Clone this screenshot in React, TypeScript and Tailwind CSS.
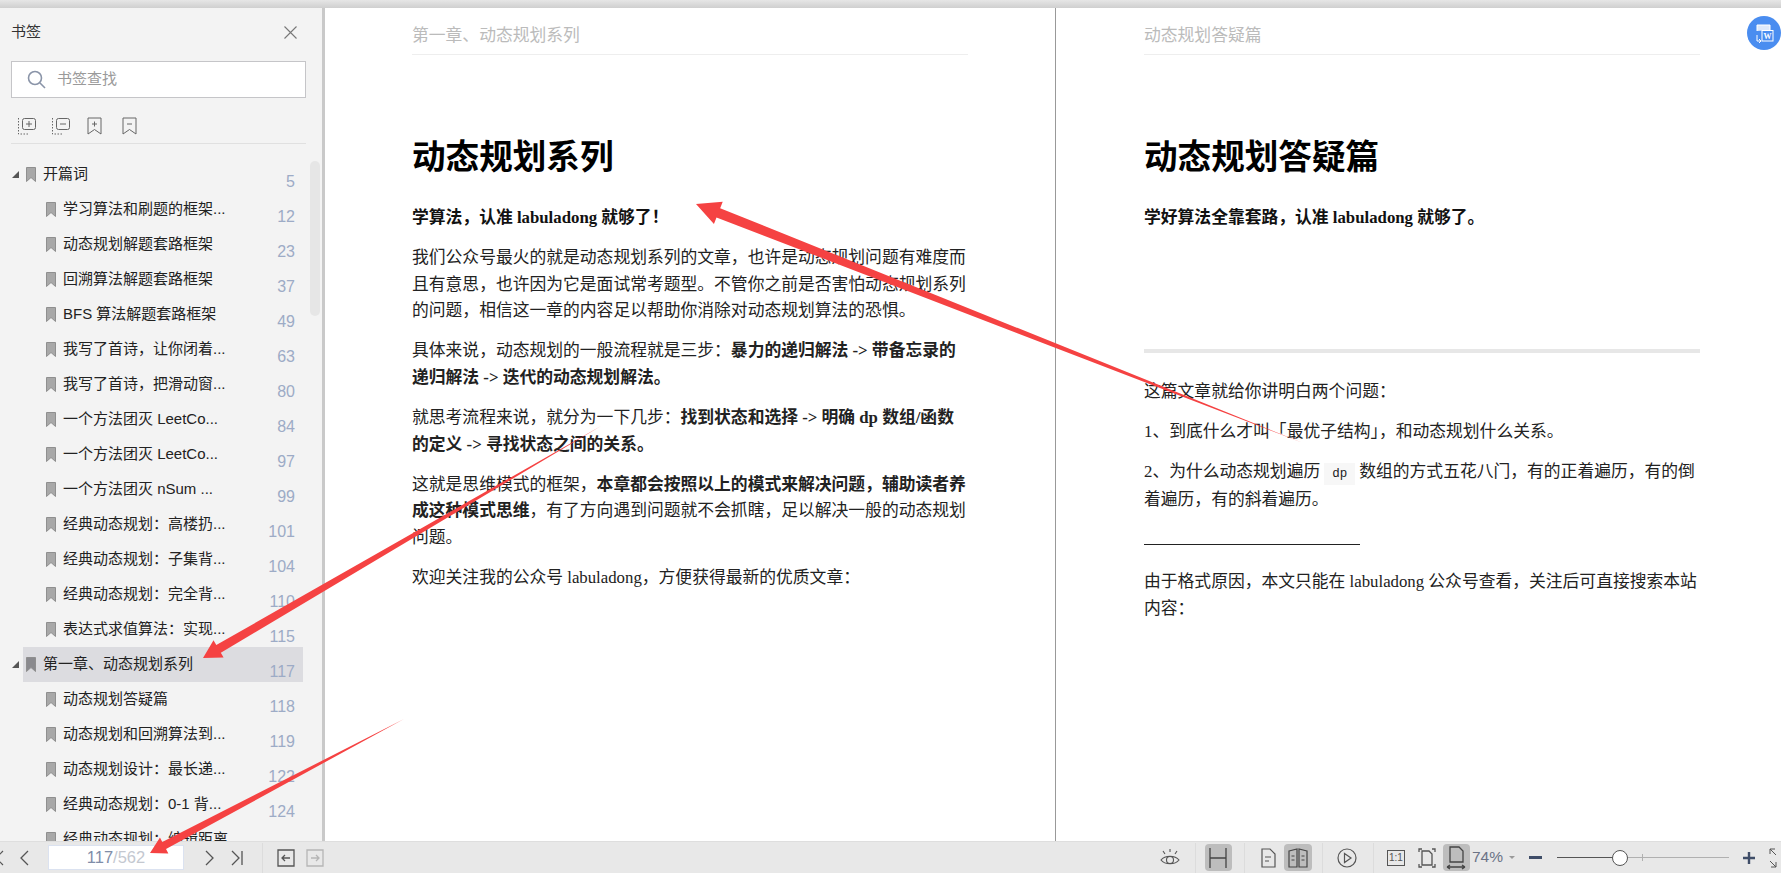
const sans = 'font-["Liberation_Sans","Noto_Sans_CJK_SC",sans-serif]';

const bookmarks: { title: string; page?: number; top?: boolean; active?: boolean }[] = [
  { title: '开篇词', page: 5, top: true },
  { title: '学习算法和刷题的框架...', page: 12 },
  { title: '动态规划解题套路框架', page: 23 },
  { title: '回溯算法解题套路框架', page: 37 },
  { title: 'BFS 算法解题套路框架', page: 49 },
  { title: '我写了首诗，让你闭着...', page: 63 },
  { title: '我写了首诗，把滑动窗...', page: 80 },
  { title: '一个方法团灭 LeetCo...', page: 84 },
  { title: '一个方法团灭 LeetCo...', page: 97 },
  { title: '一个方法团灭 nSum ...', page: 99 },
  { title: '经典动态规划：高楼扔...', page: 101 },
  { title: '经典动态规划：子集背...', page: 104 },
  { title: '经典动态规划：完全背...', page: 110 },
  { title: '表达式求值算法：实现...', page: 115 },
  { title: '第一章、动态规划系列', page: 117, top: true, active: true },
  { title: '动态规划答疑篇', page: 118 },
  { title: '动态规划和回溯算法到...', page: 119 },
  { title: '动态规划设计：最长递...', page: 122 },
  { title: '经典动态规划：0-1 背...', page: 124 },
  { title: '经典动态规划：编辑距离' },
];

function BookmarkRow({ item }: { item: (typeof bookmarks)[number] }) {
  return (
    <div className="flex h-[35px] shrink-0 items-center pr-[19px] pl-[12px]">
      <span className="w-[11px] shrink-0">
        {item.top && <span className="block h-0 w-0 border-b-[7px] border-l-[7px] border-b-[#555] border-l-transparent" />}
      </span>
      <div className={`flex h-full flex-1 items-center ${item.top ? 'pl-[3px]' : 'pl-[23px]'} ${item.active ? 'bg-[#dcdce0]' : ''}`}>
        <svg width="10" height="15" viewBox="0 0 10 15" className="shrink-0">
          <path d="M0.5 0.5H9.5V14.5L5 10.5L0.5 14.5Z" fill={item.active ? '#8a8a8e' : '#a8a8a8'} stroke="#8f8f8f" />
        </svg>
        <span className="ml-[7px] text-[15px] whitespace-nowrap text-[#222]">{item.title}</span>
        {item.page !== undefined && (
          <span className="mr-[8px] ml-auto translate-y-[8px] text-[16px] text-[#9dabc6]">{item.page}</span>
        )}
      </div>
    </div>
  );
}

function TreeTool({ minus }: { minus?: boolean }) {
  return (
    <svg width="18" height="18" viewBox="0 0 18 18" fill="none" stroke="#666">
      <path d="M0.5 1V17H11" strokeDasharray="1.5 1.5" />
      <rect x="4.5" y="1.5" width="13" height="11" rx="2" />
      <path d={minus ? 'M8 7H14' : 'M8 7H14M11 4V10'} />
    </svg>
  );
}

function MarkTool({ minus }: { minus?: boolean }) {
  return (
    <svg width="15" height="18" viewBox="0 0 15 18" fill="none" stroke="#666">
      <path d="M1 1H14V17L7.5 12.5L1 17Z" />
      <path d={minus ? 'M5 7H10' : 'M5 7H10M7.5 4.5V9.5'} />
    </svg>
  );
}

function Sidebar() {
  return (
    <aside className={`flex h-full w-[322px] shrink-0 flex-col overflow-hidden bg-[#f3f3f3] ${sans}`}>
      <div className="flex h-[48px] shrink-0 items-center justify-between pr-[25px] pl-[11px]">
        <span className="text-[15px] text-[#333]">书签</span>
        <svg width="13" height="13" viewBox="0 0 13 13" stroke="#777" strokeWidth="1.1">
          <path d="M0.5 0.5L12.5 12.5M12.5 0.5L0.5 12.5" />
        </svg>
      </div>
      <div className="mt-[5px] mr-[16px] ml-[11px] flex h-[37px] shrink-0 items-center border border-[#c5c5c8] bg-white pl-[15px]">
        <svg width="19" height="19" viewBox="0 0 19 19" fill="none" stroke="#8a94a8" strokeWidth="1.6">
          <circle cx="8" cy="8" r="6.5" />
          <path d="M13 13L18 18" />
        </svg>
        <span className="ml-[11px] text-[15px] text-[#9a9a9a]">书签查找</span>
      </div>
      <div className="mr-[16px] ml-[11px] flex h-[46px] shrink-0 items-center border-b border-[#e0e0e0] pt-[11px] pl-[7px]">
        <TreeTool />
        <span className="ml-[16px]"><TreeTool minus /></span>
        <span className="ml-[17px]"><MarkTool /></span>
        <span className="ml-[20px]"><MarkTool minus /></span>
      </div>
      <div className="relative min-h-0 flex-1 overflow-hidden pt-[13px]">
        {bookmarks.map((item, i) => (
          <BookmarkRow key={i} item={item} />
        ))}
        <div className="absolute top-[17px] right-[2px] h-[155px] w-[10px] rounded-full bg-[#e6e6e6]" />
      </div>
    </aside>
  );
}

function LeftPage() {
  return (
    <section className="h-full w-[730px] shrink-0 overflow-hidden bg-white px-[87px]">
      <div className="flex h-[47px] items-end border-b border-[#eee] pb-[4px] text-[#bbb]">第一章、动态规划系列</div>
      <h1 className="mt-[81px] text-[33.6px] leading-[44px] font-bold text-black">动态规划系列</h1>
      <p className="mt-[25px] mb-[13.5px] font-bold text-[#111]">学算法，认准 labuladong 就够了！</p>
      <p className="mb-[13.5px]">我们公众号最火的就是动态规划系列的文章，也许是动态规划问题有难度而且有意思，也许因为它是面试常考题型。不管你之前是否害怕动态规划系列的问题，相信这一章的内容足以帮助你消除对动态规划算法的恐惧。</p>
      <p className="mb-[13.5px]">具体来说，动态规划的一般流程就是三步：<b>暴力的递归解法 -&gt; 带备忘录的递归解法 -&gt; 迭代的动态规划解法。</b></p>
      <p className="mb-[13.5px]">就思考流程来说，就分为一下几步：<b>找到状态和选择 -&gt; 明确 dp 数组/函数的定义 -&gt; 寻找状态之间的关系。</b></p>
      <p className="mb-[13.5px]">这就是思维模式的框架，<b>本章都会按照以上的模式来解决问题，辅助读者养成这种模式思维</b>，有了方向遇到问题就不会抓瞎，足以解决一般的动态规划问题。</p>
      <p>欢迎关注我的公众号 labuladong，方便获得最新的优质文章：</p>
    </section>
  );
}

function RightPage() {
  return (
    <section className="h-full flex-1 overflow-hidden bg-white pr-[81px] pl-[88px]">
      <div className="flex h-[47px] items-end border-b border-[#eee] pb-[4px] text-[#bbb]">动态规划答疑篇</div>
      <h1 className="mt-[81px] text-[33.6px] leading-[44px] font-bold text-black">动态规划答疑篇</h1>
      <p className="mt-[25px] font-bold text-[#111]">学好算法全靠套路，认准 labuladong 就够了。</p>
      <div className="mt-[117px] mb-[26px] h-[4px] bg-[#e7e7e7]" />
      <p className="mb-[13.5px]">这篇文章就给你讲明白两个问题：</p>
      <p className="mb-[13.5px]">1、到底什么才叫「最优子结构」，和动态规划什么关系。</p>
      <p className="mb-[13.5px]">
        2、为什么动态规划遍历
        <code className="mx-[4px] bg-[#f7f7f7] px-[8px] py-[4px] font-['Liberation_Mono',monospace] text-[12.5px]">dp</code>
        数组的方式五花八门，有的正着遍历，有的倒着遍历，有的斜着遍历。
      </p>
      <div className="mt-[30px] mb-[24px] h-[1px] w-[216px] bg-[#222]" />
      <p>由于格式原因，本文只能在 labuladong 公众号查看，关注后可直接搜索本站内容：</p>
    </section>
  );
}

function StatusIcon({ d, w = 20, h = 20, sw = 1.2, color = '#555' }: { d: string; w?: number; h?: number; sw?: number; color?: string }) {
  return (
    <svg width={w} height={h} viewBox={`0 0 ${w} ${h}`} fill="none" stroke={color} strokeWidth={sw} className="shrink-0">
      <path d={d} />
    </svg>
  );
}

function Sep({ className }: { className: string }) {
  return <span className={`h-[30px] w-px shrink-0 bg-[#dcdcdc] ${className}`} />;
}

function StatusBar() {
  return (
    <footer className={`flex h-[32px] shrink-0 items-center overflow-hidden border-t border-[#dedede] bg-[#e8e8e8] ${sans}`}>
      <span className="ml-[-8px]"><StatusIcon w={12} h={18} d="M2 2V16M11 2L4 9L11 16" /></span>
      <span className="ml-[16px]"><StatusIcon w={9} h={18} d="M8 2L1 9L8 16" sw={1.3} /></span>
      <div className="ml-[19px] flex h-[25px] w-[136px] shrink-0 items-center justify-center border border-[#dbe2f0] bg-white text-[16.5px]">
        <span className="text-[#7f8da8]">117</span>
        <span className="text-[#c4c8d0]">/562</span>
      </div>
      <span className="ml-[21px]"><StatusIcon w={9} h={18} d="M1 2L8 9L1 16" sw={1.3} /></span>
      <span className="ml-[17px]"><StatusIcon w={12} h={18} d="M1 2L8 9L1 16M11 2V16" sw={1.3} /></span>
      <Sep className="ml-[19px]" />
      <span className="ml-[14px]"><StatusIcon w={18} h={18} sw={1.3} d="M1 1H17V17H1ZM13 9H5M8 6L5 9L8 12" /></span>
      <span className="ml-[11px]"><StatusIcon w={18} h={18} sw={1.3} color="#b5b5b5" d="M1 1H17V17H1ZM5 9H13M10 6L13 9L10 12" /></span>

      <span className="ml-auto"><StatusIcon w={20} h={22} sw={1.1} d="M1 13C5 8 15 8 19 13C15 18 5 18 1 13ZM10 9.5A3.5 3.5 0 1 0 10 16.5A3.5 3.5 0 1 0 10 9.5ZM10 2V5M3 4L5 7M17 4L15 7" /></span>
      <Sep className="ml-[15px]" />
      <span className="ml-[9px] flex h-[27px] w-[27px] shrink-0 items-center justify-center rounded-[4px] bg-[#bdbdbd]">
        <StatusIcon w={18} h={22} sw={1.3} d="M1 1V21M17 1V21M1 11H17" color="#444" />
      </span>
      <Sep className="ml-[12px]" />
      <span className="ml-[16px]"><StatusIcon w={15} h={20} d="M1 1H9L14 6V19H1ZM4 9H10M4 13H8" /></span>
      <span className="ml-[8px] flex h-[27px] w-[28px] shrink-0 items-center justify-center rounded-[4px] bg-[#bdbdbd]">
        <StatusIcon w={20} h={20} d="M1 3L9 1V19H1ZM19 3L11 1V19H19ZM3.5 8H6.5M3.5 12H6.5M13.5 8H16.5M13.5 12H16.5" color="#444" />
      </span>
      <Sep className="ml-[10px]" />
      <span className="ml-[14px]"><StatusIcon w={20} h={20} d="M10 1A9 9 0 1 0 10 19A9 9 0 1 0 10 1ZM7.5 5.5L14 10L7.5 14.5Z" /></span>
      <Sep className="ml-[16px]" />
      <span className="ml-[13px] flex h-[16px] w-[18px] shrink-0 items-center justify-center border border-[#555] text-[10px] leading-none text-[#555]">1:1</span>
      <span className="ml-[13px]"><StatusIcon w={18} h={20} d="M1 4V1H4M14 1H17V4M1 16V19H4M14 19H17V16M4 3H11L14 6V17H4Z" sw={1.3} /></span>
      <span className="ml-[7px] flex h-[27px] w-[27px] shrink-0 items-center justify-center rounded-[4px] bg-[#bdbdbd]">
        <StatusIcon w={20} h={24} d="M4 1H13L17 5V16H4ZM1 21H19M1 21L4 19M1 21L4 23M19 21L16 19M19 21L16 23" sw={1.3} color="#444" />
      </span>
      <span className="ml-[2px] text-[15.5px] text-[#6b7386]">74%</span>
      <span className="ml-[6px] h-0 w-0 border-x-[3px] border-t-[3px] border-x-transparent border-t-[#999]" />
      <span className="ml-[14px] h-[3px] w-[13px] bg-[#3f4d68]" />
      <div className="relative ml-[15px] h-[12px] w-[172px] shrink-0">
        <span className="absolute top-[5px] left-0 h-px w-[63px] bg-[#555]" />
        <span className="absolute top-[5px] left-[63px] h-px w-[109px] bg-[#b0b0b0]" />
        <span className="absolute top-[2px] left-[85px] h-[7px] w-px bg-[#b0b0b0]" />
        <span className="absolute top-[-2px] left-[55px] h-[16px] w-[16px] rounded-full border border-[#555] bg-white" />
      </div>
      <span className="ml-[14px]"><StatusIcon w={12} h={12} sw={2.4} color="#3f4d68" d="M0 6H12M6 0V12" /></span>
      <span className="mr-[4px] ml-[14px]"><StatusIcon w={8} h={20} sw={1} d="M1 6V1H6M1 1L7 7M7 14V19H2M7 19L1 13" /></span>
    </footer>
  );
}

// tapered annotation arrow, thin at the tail and widest at the head
function Arrow({ from, to, body, head, len }: { from: [number, number]; to: [number, number]; body: number; head: number; len: number }) {
  const dx = to[0] - from[0];
  const dy = to[1] - from[1];
  const size = Math.hypot(dx, dy);
  const ux = dx / size;
  const uy = dy / size;
  const nx = -uy;
  const ny = ux;
  const bx = to[0] - ux * len;
  const by = to[1] - uy * len;
  const pts = [
    from,
    [bx + (nx * body) / 2, by + (ny * body) / 2],
    [bx + (nx * head) / 2, by + (ny * head) / 2],
    to,
    [bx - (nx * head) / 2, by - (ny * head) / 2],
    [bx - (nx * body) / 2, by - (ny * body) / 2],
  ];
  return <polygon points={pts.map((p) => p.join(',')).join(' ')} fill="#f54242" />;
}

export default function App() {
  return (
    <div className="relative flex h-[873px] w-[1781px] flex-col overflow-hidden bg-white font-['Liberation_Serif','Noto_Sans_CJK_SC',serif] text-[16.8px] leading-[26.6px] text-[#222]">
      <div className="h-[8px] shrink-0 bg-gradient-to-b from-[#e6e6e6] to-[#cfcfcf]" />
      <div className="flex min-h-0 flex-1">
        <Sidebar />
        <div className="h-full w-[3px] shrink-0 bg-[#c9c9c9]" />
        <LeftPage />
        <div className="h-full w-px shrink-0 bg-[#999]" />
        <RightPage />
      </div>
      <StatusBar />

      <div className="absolute top-[16px] right-0 flex h-[34px] w-[34px] items-center justify-center rounded-full bg-[#4a8df0]">
        <svg width="20" height="20" viewBox="0 0 20 20" fill="none" stroke="white" strokeWidth="1">
          <path d="M3 8V2H16V7" fill="#dce8fb" />
          <rect x="8" y="7.5" width="11" height="10.5" fill="#4a8df0" />
          <text x="13.5" y="16" textAnchor="middle" fontSize="8" fontWeight="700" fill="white" stroke="none">W</text>
          <path d="M3 12V18H7M5 16L7 18L5 20" />
        </svg>
      </div>

      <svg className="pointer-events-none absolute inset-0" width="1781" height="873">
        <Arrow from={[1303, 443]} to={[696, 204]} body={10} head={24} len={24} />
        <Arrow from={[601, 426]} to={[203, 658]} body={9} head={20} len={18} />
        <Arrow from={[404, 719]} to={[150, 853]} body={8} head={18} len={16} />
      </svg>
    </div>
  );
}
